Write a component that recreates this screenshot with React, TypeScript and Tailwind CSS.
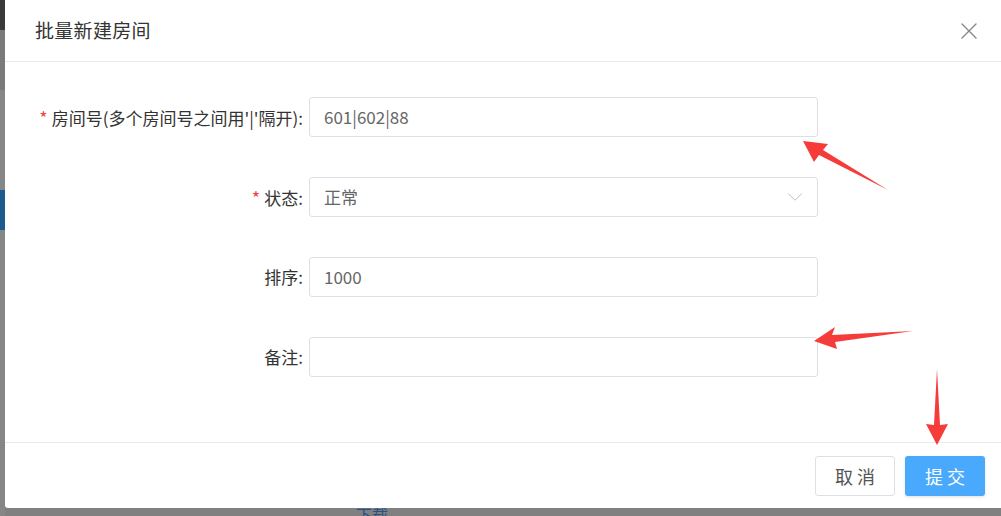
import React from 'react';
import { X, ChevronDown } from 'lucide-react';

const font = { fontFamily: '"Noto Sans CJK SC", "Microsoft YaHei", sans-serif' };

function Field({ label, required, children }: { label: string; required?: boolean; children: React.ReactNode }) {
  return (
    <div className="flex items-center h-[40px]">
      <label className="w-[304px] pr-[6px] text-right text-[17px] text-[#333] whitespace-nowrap shrink-0">
        {required && <span className="text-[#f0433f] text-[18px] mr-[4px]">*</span>}
        {label}:
      </label>
      {children}
    </div>
  );
}

function Arrows() {
  return (
    <svg className="absolute inset-0 pointer-events-none" width="1001" height="516">
      <polygon fill="#f63c3a" points="803,141 828,144 823,150 888,190 819,155 814,162" />
      <polygon fill="#f63c3a" points="814,341 835,327 832,335 913,331 835,342 837,349" />
      <polygon fill="#f63c3a" points="937,445 926,424 934,425 937,369 940,425 948,424" />
    </svg>
  );
}

export default function App() {
  return (
    <div className="relative w-[1001px] h-[516px] overflow-hidden bg-[#808080]" style={font}>
      {/* page behind the mask */}
      <div className="absolute left-0 top-0 w-[5px] h-full flex flex-col">
        <div className="h-[30px] bg-[#3a3a3a]" />
        <div className="h-[60px] bg-[#7a7a7a]" />
        <div className="h-[100px] bg-[#868686]" />
        <div className="h-[40px] bg-[#1f5a8c]" />
        <div className="flex-1 bg-[#868686]" />
      </div>
      <div className="absolute left-[356px] top-[504px] text-[16px] leading-[20px] text-[#2c4f86]">下载</div>

      {/* modal */}
      <div className="absolute left-[5px] top-0 w-[996px] h-[508px] bg-white rounded-bl-[3px] flex flex-col">
        <div className="h-[62px] border-b border-[#e8e8e8] flex items-center justify-between pl-[30px] pr-[18px] shrink-0">
          <h2 className="text-[19px] text-[#333] tracking-[0.3px]">批量新建房间</h2>
          <X className="w-[28px] h-[28px] text-[#888]" strokeWidth={1.2} />
        </div>

        <div className="pt-[35px] pb-[65px] flex flex-col gap-[40px]">
          <Field label="房间号(多个房间号之间用'|'隔开)" required>
            <div className="w-[509px] h-[40px] border border-[#dcdfe6] rounded-[3px] flex items-center px-[14px] text-[17px] text-[#666]">
              601|602|88
            </div>
          </Field>
          <Field label="状态" required>
            <div className="w-[509px] h-[40px] border border-[#dcdfe6] rounded-[3px] flex items-center justify-between pl-[14px] pr-[9px] text-[17px] text-[#666]">
              <span>正常</span>
              <ChevronDown className="w-[26px] h-[26px] text-[#bbb]" strokeWidth={0.9} />
            </div>
          </Field>
          <Field label="排序">
            <div className="w-[509px] h-[40px] border border-[#dcdfe6] rounded-[3px] flex items-center px-[14px] text-[17px] text-[#666]">
              1000
            </div>
          </Field>
          <Field label="备注">
            <div className="w-[509px] h-[40px] border border-[#dcdfe6] rounded-[3px]" />
          </Field>
        </div>

        <div className="border-t border-[#e8e8e8] flex justify-end items-start gap-[10px] pt-[13px] pr-[16px]">
          <button className="w-[80px] h-[40px] border border-[#dcdfe6] rounded-[3px] bg-white text-[18px] text-[#555] tracking-[4px] pl-[4px]">
            取消
          </button>
          <button className="w-[80px] h-[40px] rounded-[3px] bg-[#49a9fd] text-[18px] text-white tracking-[4px] pl-[4px] shadow-[0_1px_3px_rgba(0,0,0,0.12)]">
            提交
          </button>
        </div>
      </div>

      <Arrows />
    </div>
  );
}
